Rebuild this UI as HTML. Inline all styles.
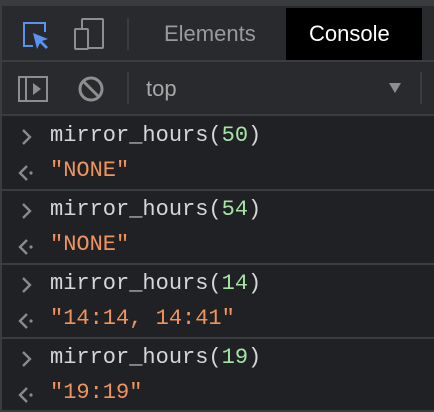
<!DOCTYPE html>
<html><head><style>
body{margin:0;width:434px;height:412px;background:#202124;overflow:hidden;position:relative;font-family:"Liberation Sans",sans-serif}
.a{position:absolute}
.mono{font-family:"Liberation Mono",monospace;font-size:22px;white-space:pre}
.in{color:#d6d6d6}.g{color:#a5e4a5}.o{color:#f0945f}
.sep{position:absolute;left:0;width:434px;height:2px;background:#3b3c3f}
</style></head><body>
<div class="a" style="left:0;top:0;width:434px;height:6px;background:#3a3b3e"></div>
<div class="a" style="left:0;top:6px;width:434px;height:54px;background:#292a2d"></div>
<div class="a" style="left:286px;top:8px;width:136px;height:52px;background:#000"></div>
<div class="a" style="left:0;top:60px;width:434px;height:2px;background:#3b3c3f"></div>
<div class="a" style="left:0;top:62px;width:434px;height:52px;background:#292a2d"></div>
<div class="a" style="left:0;top:114px;width:434px;height:2px;background:#3b3c3f"></div>
<div class="a" style="left:0;top:0;width:2px;height:412px;background:#3b3c3f"></div>
<svg class="a" style="left:0;top:0" width="434" height="116">
<path d="M33 46H24V23H45V32" fill="none" stroke="#5a93ee" stroke-width="2"/>
<path d="M33 33L48 39L42 41L48 47L46 49L40 43L37 49Z" fill="#5a93ee"/>
<rect x="82" y="19" width="21" height="29" rx="1" fill="none" stroke="#8e8e8e" stroke-width="2"/>
<rect x="75" y="29" width="13" height="20" rx="1" fill="#292a2d" stroke="#8e8e8e" stroke-width="2"/>
<rect x="127" y="18" width="2" height="32" fill="#3b3c3f"/>
<rect x="19" y="77" width="28" height="24" fill="none" stroke="#8e8e8e" stroke-width="2"/>
<rect x="25" y="77" width="2" height="24" fill="#8e8e8e"/>
<path d="M33 83L41 89L33 95Z" fill="#8e8e8e"/>
<circle cx="91" cy="89" r="11" fill="none" stroke="#8e8e8e" stroke-width="3"/>
<path d="M84 82L98 96" stroke="#8e8e8e" stroke-width="3"/>
<rect x="127" y="72" width="2" height="32" fill="#3b3c3f"/>
<path d="M389 83H401L395 93Z" fill="#8e8e8e"/>
<rect x="420" y="72" width="2" height="32" fill="#3b3c3f"/>
</svg>
<div class="a" style="left:164px;top:21px;font-size:22px;color:#9a9a9a">Elements</div>
<div class="a" style="left:309px;top:21px;font-size:22px;color:#fff">Console</div>
<div class="a" style="left:146px;top:76px;font-size:22px;color:#a8a8a8">top</div>

<svg class="a" style="left:0;top:116px" width="40" height="296">
<g fill="none" stroke="#8a8a8a" stroke-width="2.4">
<path d="M23 14L30 21L23 28"/><path d="M27 50L20 57L27 64"/>
<path d="M23 88L30 95L23 102"/><path d="M27 124L20 131L27 138"/>
<path d="M23 162L30 169L23 176"/><path d="M27 198L20 205L27 212"/>
<path d="M23 236L30 243L23 250"/><path d="M27 272L20 279L27 286"/>
</g>
<g fill="#8a8a8a"><circle cx="31" cy="57" r="1.6"/><circle cx="31" cy="131" r="1.6"/><circle cx="31" cy="205" r="1.6"/><circle cx="31" cy="279" r="1.6"/></g>
</svg>

<div class="a mono in" style="left:50px;top:123px">mirror_hours(<span class="g">50</span>)</div>
<div class="a mono o" style="left:50px;top:158px">"NONE"</div>
<div class="sep" style="top:189px"></div>
<div class="a mono in" style="left:50px;top:197px">mirror_hours(<span class="g">54</span>)</div>
<div class="a mono o" style="left:50px;top:232px">"NONE"</div>
<div class="sep" style="top:263px"></div>
<div class="a mono in" style="left:50px;top:271px">mirror_hours(<span class="g">14</span>)</div>
<div class="a mono o" style="left:50px;top:306px">"14:14, 14:41"</div>
<div class="sep" style="top:337px"></div>
<div class="a mono in" style="left:50px;top:345px">mirror_hours(<span class="g">19</span>)</div>
<div class="a mono o" style="left:50px;top:380px">"19:19"</div>
<div class="sep" style="top:410px"></div>
</body></html>
